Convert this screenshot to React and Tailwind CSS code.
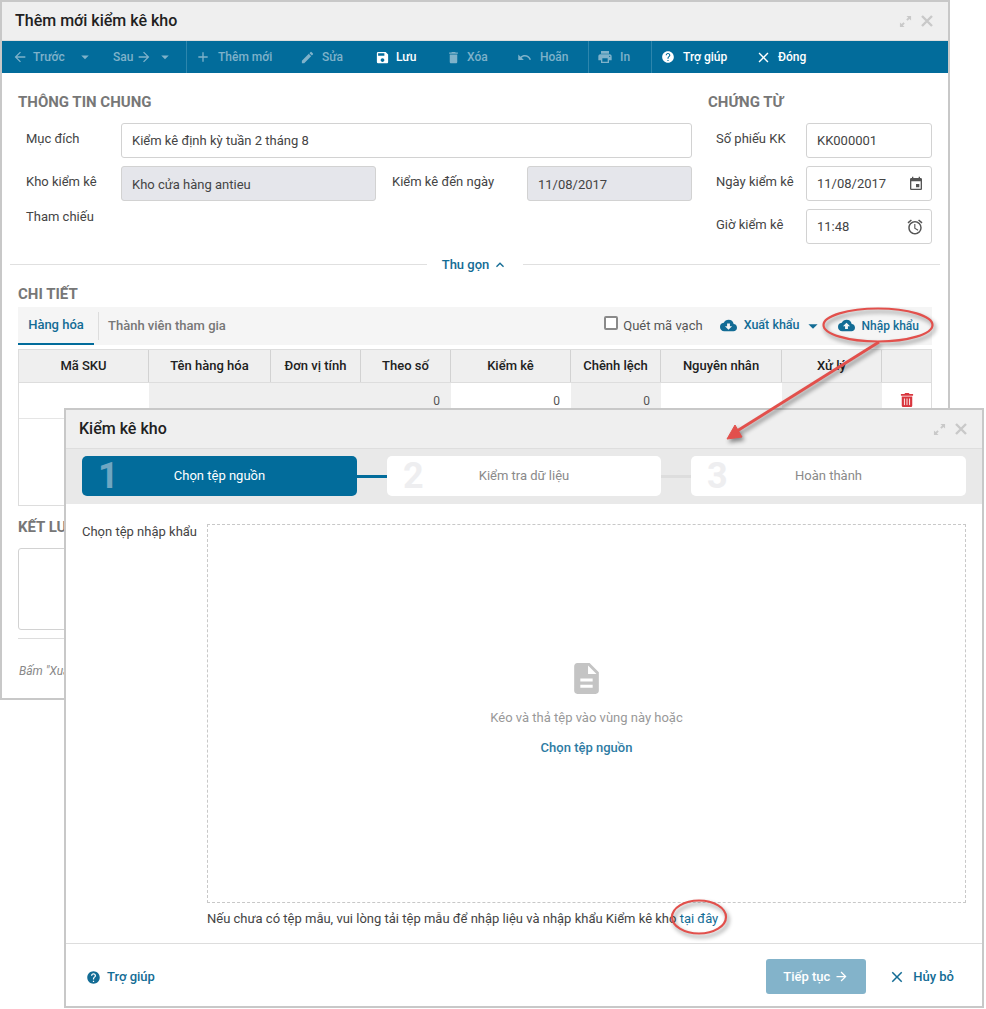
import React from 'react';
import {
  MdAdd, MdAlarm, MdArrowBack, MdArrowDropDown, MdArrowForward, MdClose, MdCloudDownload, MdCloudUpload,
  MdDelete, MdDescription, MdEdit, MdEvent, MdExpandLess, MdHelp, MdPrint, MdSave, MdUndo,
} from 'react-icons/md';
import { FaTrashAlt } from 'react-icons/fa';

const ExpandIcon = () => (
  <svg width="13" height="13" viewBox="0 0 14 14" fill="#c9c9c9">
    <path d="M8 1h5v5l-1.8-1.8-2 2-1.4-1.4 2-2zM6 13H1V8l1.8 1.8 2-2 1.4 1.4-2 2z" />
  </svg>
);

const CloseIcon = () => (
  <svg width="12" height="12" viewBox="0 0 12 12" fill="none" stroke="#c9c9c9" strokeWidth="2.4">
    <path d="M1 1l10 10M11 1L1 11" />
  </svg>
);

const WindowTitle = ({ title, className }) => (
  <div className={`flex items-center justify-between bg-[#efefef] border-b border-[#dedede] ${className}`}>
    <span className="text-[16px] font-medium text-[#212121]">{title}</span>
    <div className="flex items-center gap-[9px]">
      <ExpandIcon />
      <CloseIcon />
    </div>
  </div>
);

const ToolItem = ({ icon, label, right, caret, active, className = '' }) => (
  <div className={`flex items-center ${active ? 'text-white' : 'text-[#7fb2ca]'} ${className}`}>
    {icon}
    <span className="text-[12px] font-medium">{label}</span>
    {right}
    {caret && <MdArrowDropDown size={18} className="ml-[4px]" />}
  </div>
);

const Toolbar = () => (
  <div className="flex h-[32px] items-center bg-[#026c9b]">
    <div className="flex h-full w-[185px] items-center border-r border-[#2d86ad]">
      <ToolItem className="ml-[10px] w-[101px]" icon={<MdArrowBack size={16} className="mr-[5px]" />} label="Trước" right={<MdArrowDropDown size={18} className="ml-[11px]" />} />
      <ToolItem label="Sau" right={<MdArrowForward size={16} className="ml-[3px]" />} caret />
    </div>
    <ToolItem className="ml-[8px] w-[105px]" icon={<MdAdd size={16} className="mr-[7px]" />} label="Thêm mới" />
    <ToolItem className="w-[75px]" icon={<MdEdit size={15} className="mr-[7px]" />} label="Sửa" />
    <ToolItem active className="w-[71px]" icon={<MdSave size={15} className="mr-[6px]" />} label="Lưu" />
    <ToolItem className="w-[71px]" icon={<MdDelete size={15} className="mr-[6px]" />} label="Xóa" />
    <ToolItem className="w-[71px]" icon={<MdUndo size={15} className="mr-[8px]" />} label="Hoãn" />
    <div className="flex h-full w-[64px] items-center border-x border-[#2d86ad] pl-[8px]">
      <ToolItem icon={<MdPrint size={16} className="mr-[7px]" />} label="In" />
    </div>
    <ToolItem active className="ml-[9px] w-[94px]" icon={<MdHelp size={14} className="mr-[8px]" />} label="Trợ giúp" />
    <ToolItem active icon={<MdClose size={17} className="mr-[6px]" />} label="Đóng" />
  </div>
);

const SectionTitle = ({ children, className = '' }) => (
  <div className={`text-[15px] font-bold leading-[16px] text-[#777777] ${className}`}>{children}</div>
);

const Field = ({ value, disabled, icon, className = '' }) => (
  <div className={`flex h-[35px] items-center justify-between rounded-[3px] border border-[#d2d2d2] pl-[10px] pr-[7px] text-[13px] text-[#444444] ${disabled ? 'bg-[#e5e6eb] pt-[2px]' : 'bg-white'} ${className}`}>
    <span>{value}</span>
    {icon}
  </div>
);

const Label = ({ children, className = '' }) => (
  <span className={`-mt-[4px] text-[13px] text-[#444444] ${className}`}>{children}</span>
);

const columns = [
  ['Mã SKU', 'w-[130px]'],
  ['Tên hàng hóa', 'w-[122px]'],
  ['Đơn vị tính', 'w-[90px]'],
  ['Theo số', 'w-[90px]'],
  ['Kiểm kê', 'w-[120px]'],
  ['Chênh lệch', 'w-[90px]'],
  ['Nguyên nhân', 'w-[121px]'],
  ['Xử lý', 'w-[100px]'],
  ['', 'flex-1'],
];

const rowCells = [
  ['', 'w-[130px] bg-white'],
  ['', 'w-[122px] bg-[#efefef]'],
  ['', 'w-[90px] bg-[#efefef]'],
  ['0', 'w-[90px] bg-[#efefef]'],
  ['0', 'w-[120px] bg-white'],
  ['0', 'w-[90px] bg-[#efefef]'],
  ['', 'w-[121px] bg-white'],
  ['', 'w-[100px] bg-[#efefef]'],
];

const BackWindow = () => (
  <div className="absolute left-0 top-0 flex h-[700px] w-[950px] flex-col border-2 border-[#c8c8c8] bg-white font-['Roboto',sans-serif]">
    <WindowTitle title="Thêm mới kiểm kê kho" className="h-[39px] pl-[13px] pr-[15px]" />
    <Toolbar />

    <div className="flex px-[16px] pt-[21px]">
      <div className="w-[674px]">
        <SectionTitle>THÔNG TIN CHUNG</SectionTitle>
        <div className="mt-[13px] flex items-center">
          <Label className="w-[103px] pl-[8px]">Mục đích</Label>
          <Field value="Kiểm kê định kỳ tuần 2 tháng 8" className="flex-1" />
        </div>
        <div className="mt-[8px] flex items-center">
          <Label className="w-[103px] pl-[8px]">Kho kiểm kê</Label>
          <Field value="Kho cửa hàng antieu" disabled className="w-[255px]" />
          <Label className="w-[151px] pl-[16px]">Kiểm kê đến ngày</Label>
          <Field value="11/08/2017" disabled className="flex-1" />
        </div>
        <div className="mt-[6px] pl-[8px] text-[13px] text-[#444444]">Tham chiếu</div>
      </div>
      <div className="ml-[16px] flex-1">
        <SectionTitle>CHỨNG TỪ</SectionTitle>
        <div className="mt-[13px] flex items-center">
          <Label className="w-[98px] pl-[8px]">Số phiếu KK</Label>
          <Field value="KK000001" className="flex-1" />
        </div>
        <div className="mt-[8px] flex items-center">
          <Label className="w-[98px] pl-[8px]">Ngày kiểm kê</Label>
          <Field value="11/08/2017" icon={<MdEvent size={16} className="text-[#555555]" />} className="flex-1" />
        </div>
        <div className="mt-[8px] flex items-center">
          <Label className="w-[98px] pl-[8px]">Giờ kiểm kê</Label>
          <Field value="11:48" icon={<MdAlarm size={18} className="text-[#555555]" />} className="flex-1" />
        </div>
      </div>
    </div>

    <div className="mx-[8px] mt-[11px] flex items-center">
      <div className="h-px flex-1 bg-[#e0e0e0]" />
      <div className="flex w-[96px] items-center justify-center text-[13px] font-medium text-[#136c95]">
        Thu gọn
        <MdExpandLess size={16} className="ml-[3px]" />
      </div>
      <div className="h-px flex-1 bg-[#e0e0e0]" />
    </div>

    <SectionTitle className="ml-[16px] mt-[11px]">CHI TIẾT</SectionTitle>
    <div className="mx-[16px] mt-[5px] flex h-[38px] items-stretch justify-between bg-[#f5f5f5] text-[13px]">
      <div className="flex items-stretch">
        <div className="flex w-[76px] items-center justify-center border-b-2 border-[#026c9b] font-medium text-[#136c95]">Hàng hóa</div>
        <div className="ml-[4px] mt-[5px] h-[28px] w-px bg-[#dddddd]" />
        <div className="ml-[9px] flex items-center font-medium text-[#777777]">Thành viên tham gia</div>
      </div>
      <div className="flex items-center font-medium">
        <span className="mb-[6px] mr-[5px] h-[14px] w-[14px] rounded-[2px] border-2 border-[#8a8a8a] bg-white" />
        <span className="font-normal text-[#555555]">Quét mã vạch</span>
        <MdCloudDownload size={17} className="ml-[17px] mr-[7px] text-[#136c95]" />
        <span className="text-[12.5px] text-[#136c95]">Xuất khẩu</span>
        <MdArrowDropDown size={22} className="ml-[2px] text-[#136c95]" />
        <MdCloudUpload size={17} className="ml-[14px] mr-[7px] text-[#136c95]" />
        <span className="mr-[13px] text-[12px] text-[#136c95]">Nhập khẩu</span>
      </div>
    </div>

    <div className="mx-[16px] mt-[4px] h-[157px] border border-[#dddddd]">
      <div className="flex h-[33px] bg-[#efefef] border-b border-[#dddddd]">
        {columns.map(([name, width], i) => (
          <div key={i} className={`flex items-center justify-center border-r border-[#d2d2d2] text-[13px] font-medium text-[#212121] last:border-r-0 ${width}`}>
            {name}
          </div>
        ))}
      </div>
      <div className="flex h-[36px] border-b border-[#e5e5e5]">
        {rowCells.map(([value, cls], i) => (
          <div key={i} className={`flex items-center justify-end pr-[11px] pt-[2px] text-[12px] text-[#555555] ${cls}`}>
            {value}
          </div>
        ))}
        <div className="flex flex-1 items-center justify-center">
          <FaTrashAlt size={14} className="text-[#d9363e]" />
        </div>
      </div>
    </div>

    <SectionTitle className="ml-[16px] mt-[13px]">KẾT LUẬN</SectionTitle>
    <div className="mx-[16px] mt-[13px] h-[82px] rounded-[3px] border border-[#d2d2d2]" />
    <div className="mx-[16px] mt-[8px] h-px bg-[#dddddd]" />
    <div className="ml-[17px] mt-[23px] text-[12px] italic text-[#888888]">Bấm "Xuất khẩu"</div>
  </div>
);

const Step = ({ number, label, active, className = '' }) => (
  <div className={`relative flex h-[40px] items-center justify-center rounded-[5px] ${active ? 'bg-[#026c9b] text-white' : 'bg-white text-[#8a8a8a]'} ${className}`}>
    <span className={`absolute left-[16px] top-[2px] text-[36px] font-bold leading-none ${active ? 'text-[#6fa6c2]' : 'text-[#eeeef0]'}`}>{number}</span>
    <span className="text-[13px]">{label}</span>
  </div>
);

const FrontWindow = () => (
  <div className="absolute left-[64px] top-[408px] flex h-[600px] w-[920px] flex-col border-2 border-[#c8c8c8] bg-white font-['Roboto',sans-serif]">
    <WindowTitle title="Kiểm kê kho" className="h-[39px] pl-[13px] pr-[15px]" />

    <div className="flex h-[55px] items-center bg-[#e9e9e9] pb-[1px] pl-[16px]">
      <Step number="1" label="Chọn tệp nguồn" active className="w-[275px]" />
      <div className="h-[3px] w-[30px] bg-[#026c9b]" />
      <Step number="2" label="Kiểm tra dữ liệu" className="w-[274px]" />
      <div className="h-[3px] w-[30px] bg-[#dddddd]" />
      <Step number="3" label="Hoàn thành" className="w-[275px]" />
    </div>

    <div className="flex flex-1 pl-[16px] pr-[16px] pt-[20px]">
      <div className="w-[125px] text-[13px] leading-[16px] text-[#444444]">Chọn tệp nhập khẩu</div>
      <div className="flex-1">
        <div className="flex h-[379px] flex-col items-center border border-dashed border-[#c8c8c8] pt-[135px]">
          <MdDescription size={37} className="text-[#c4c4c4]" />
          <div className="mt-[11px] text-[13px] text-[#999999]">Kéo và thả tệp vào vùng này hoặc</div>
          <div className="mt-[10px] text-[13px] font-medium text-[#2d7ba3]">Chọn tệp nguồn</div>
        </div>
        <div className="mt-[6px] text-[13px] text-[#444444]">
          Nếu chưa có tệp mẫu, vui lòng tải tệp mẫu để nhập liệu và nhập khẩu Kiểm kê kho <span className="text-[#136c95]">tại đây</span>
        </div>
      </div>
    </div>

    <div className="flex h-[63px] items-center justify-between border-t border-[#dddddd] pl-[20px] pr-[28px] pt-[2px]">
      <div className="mt-[2px] flex items-center text-[13px] font-medium text-[#136c95]">
        <MdHelp size={15} className="mr-[6px]" />
        Trợ giúp
      </div>
      <div className="flex items-center">
        <div className="flex h-[35px] w-[100px] items-center justify-center rounded-[3px] bg-[#83b3ca] pt-[1px] text-[13px] font-medium text-white">
          Tiếp tục
          <MdArrowForward size={15} className="ml-[4px]" />
        </div>
        <div className="ml-[22px] mt-[2px] flex items-center text-[13px] font-medium text-[#136c95]">
          <MdClose size={18} className="mr-[7px]" />
          Hủy bỏ
        </div>
      </div>
    </div>
  </div>
);

// red callouts drawn over the two windows
const Callouts = () => (
  <svg className="absolute left-0 top-0" width="986" height="1009" fill="none" style={{ filter: 'drop-shadow(2px 3px 2px rgba(0,0,0,0.45))' }}>
    <ellipse cx="878" cy="325" rx="54.5" ry="16.5" stroke="#e2504c" strokeWidth="2.2" />
    <ellipse cx="699" cy="917" rx="27" ry="16.5" stroke="#e2504c" strokeWidth="2.2" />
    <path d="M879 342 L737 431" stroke="#e2504c" strokeWidth="3" />
    <path d="M727 439 L735 425 L742 437 Z" fill="#e2504c" stroke="#e2504c" />
  </svg>
);

export default function App() {
  return (
    <div className="relative h-[1009px] w-[986px] overflow-hidden bg-white">
      <BackWindow />
      <FrontWindow />
      <Callouts />
    </div>
  );
}
